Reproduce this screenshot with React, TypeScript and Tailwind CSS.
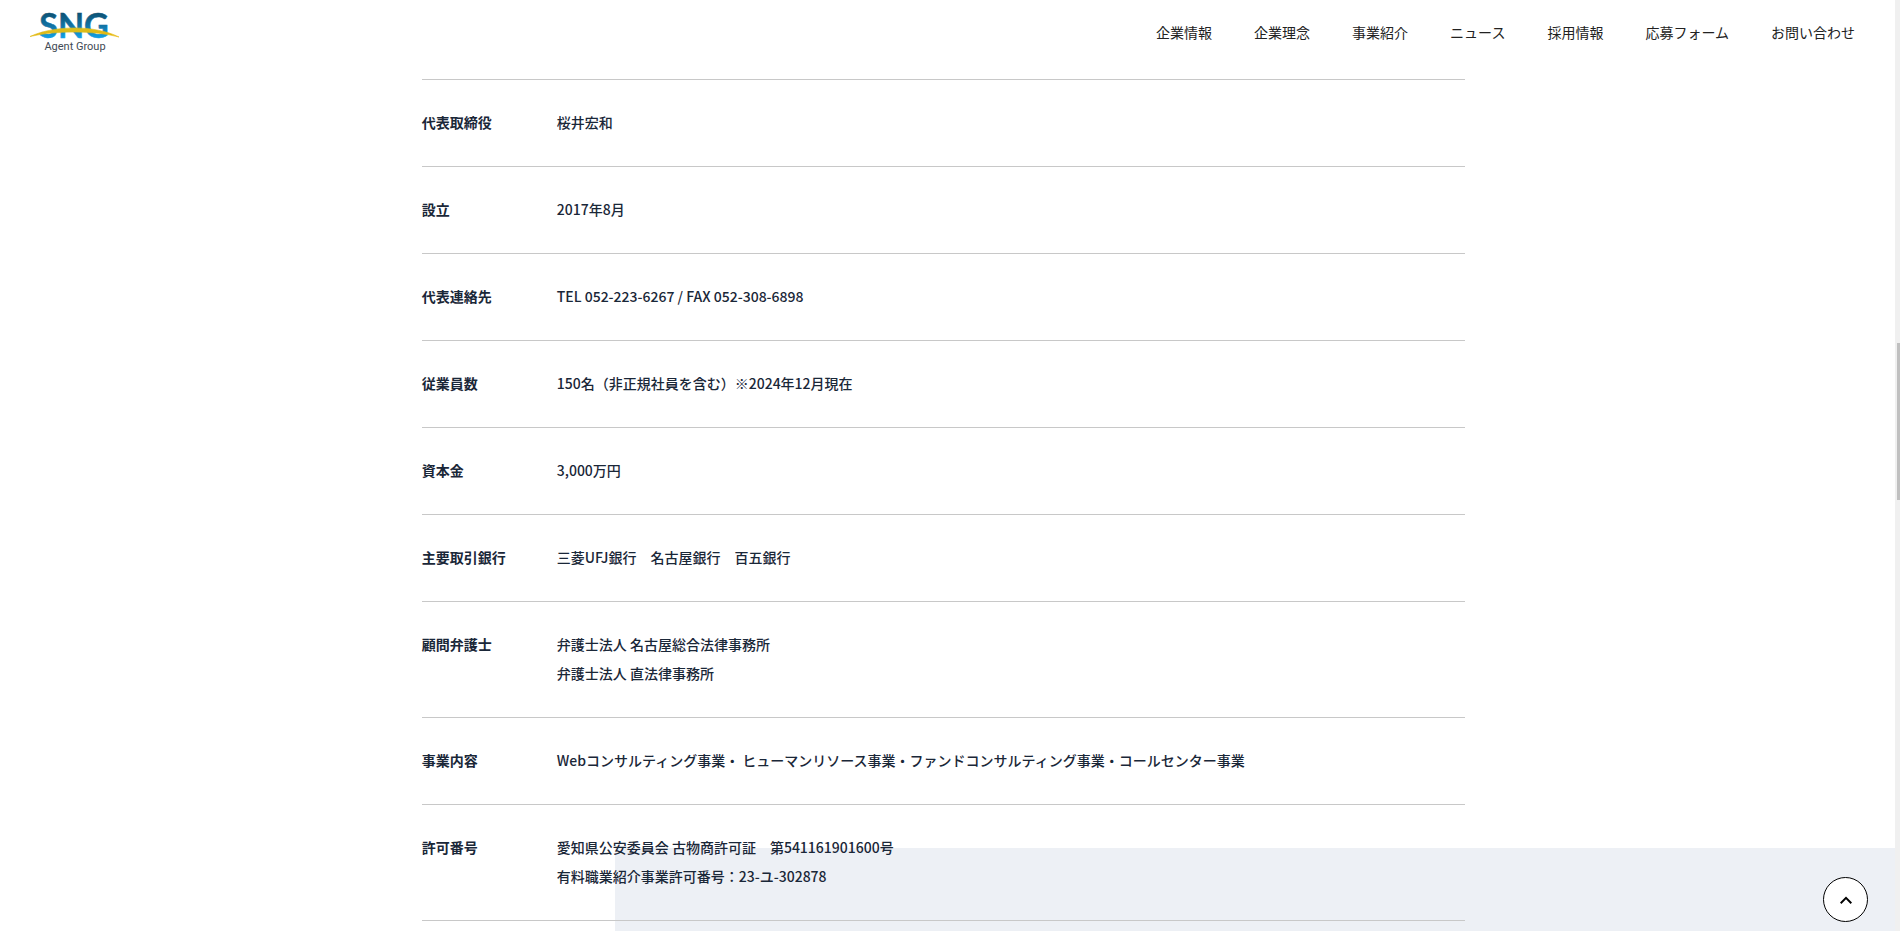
import React from "react";

const navItems = [
  "企業情報",
  "企業理念",
  "事業紹介",
  "ニュース",
  "採用情報",
  "応募フォーム",
  "お問い合わせ",
];

const companyInfo = [
  { label: "代表取締役", lines: ["桜井宏和"] },
  { label: "設立", lines: ["2017年8月"] },
  { label: "代表連絡先", lines: ["TEL 052-223-6267 / FAX 052-308-6898"] },
  { label: "従業員数", lines: ["150名（非正規社員を含む）※2024年12月現在"] },
  { label: "資本金", lines: ["3,000万円"] },
  { label: "主要取引銀行", lines: ["三菱UFJ銀行　名古屋銀行　百五銀行"] },
  { label: "顧問弁護士", lines: ["弁護士法人 名古屋総合法律事務所", "弁護士法人 直法律事務所"] },
  {
    label: "事業内容",
    lines: ["Webコンサルティング事業・ ヒューマンリソース事業・ファンドコンサルティング事業・コールセンター事業"],
  },
  {
    label: "許可番号",
    lines: ["愛知県公安委員会 古物商許可証　第541161901600号", "有料職業紹介事業許可番号：23-ユ-302878"],
  },
];

const Logo = () => (
  <svg className="w-[90px] h-16" viewBox="0 0 90 64" role="img" aria-label="SNG Agent Group">
    <defs>
      <linearGradient id="sng" gradientUnits="userSpaceOnUse" x1="0" y1="12" x2="0" y2="39">
        <stop offset="0" stopColor="#0c4f70" />
        <stop offset="0.5" stopColor="#1272a3" />
        <stop offset="1" stopColor="#12a5ec" />
      </linearGradient>
      <linearGradient id="swoosh" x1="0" y1="0" x2="1" y2="0">
        <stop offset="0" stopColor="#e3b912" />
        <stop offset="0.5" stopColor="#d9bd1c" />
        <stop offset="1" stopColor="#e8b80c" />
      </linearGradient>
    </defs>
    <text
      x="44"
      y="38"
      textAnchor="middle"
      fontSize="34"
      fontWeight="700"
      fill="url(#sng)"
      stroke="url(#sng)"
      strokeWidth="0.500"
      className="font-['Lato',sans-serif]"
    >
      SNG
    </text>
    <path
      d="M0 36.500C25 25 65 25 89 37C65 30.500 25 30.500 0 36.500Z"
      fill="url(#swoosh)"
      stroke="url(#swoosh)"
      strokeWidth="0.600"
    />
    <text
      x="45"
      y="50"
      textAnchor="middle"
      fontSize="11"
      fill="#3f4a55"
      className="font-['Roboto',sans-serif]"
    >
      Agent Group
    </text>
  </svg>
);

export default function CompanyPage() {
  return (
    <div className="flex h-screen overflow-hidden bg-white font-['Noto_Sans_CJK_JP',sans-serif] text-[14px]">
      <div className="relative flex-1 min-w-0">
        {/* Background panel */}
        <div className="absolute bottom-0 right-0 h-[83px] w-[67.55%] bg-[#edf0f5]"></div>

        <header className="relative flex h-16 items-center justify-between pl-[30px] pr-10">
          <a href="#">
            <Logo />
          </a>
          <nav>
            <ul className="flex gap-[42px] text-[#222]">
              {navItems.map((item) => (
                <li key={item}>
                  <a href="#" className="hover:opacity-70 transition-opacity">{item}</a>
                </li>
              ))}
            </ul>
          </nav>
        </header>

        {/* Company table */}
        <main className="relative pt-[15px] pr-2">
          <table className="mx-auto w-[55.3%] border-t border-[#c8c8c8] text-left font-medium leading-[29px] text-[#1a2738]">
            <tbody>
              {companyInfo.map((row) => (
                <tr key={row.label} className="border-b border-[#c8c8c8] align-top">
                  <th scope="row" className="w-[135px] pt-7 pb-[29px] font-bold">{row.label}</th>
                  <td className="pt-7 pb-[29px]">
                    {row.lines.map((line) => (
                      <p key={line}>{line}</p>
                    ))}
                  </td>
                </tr>
              ))}
            </tbody>
          </table>
        </main>

        <button
          type="button"
          aria-label="ページの先頭へ"
          className="absolute bottom-[9px] right-[27px] flex h-[45px] w-[45px] items-center justify-center rounded-full border border-black bg-white"
        >
          <svg className="w-3 h-2" viewBox="0 0 12 8" fill="none" stroke="#000" strokeWidth="2">
            <path d="M0.700 7.200L6 1.900L11.300 7.200" />
          </svg>
        </button>
      </div>

      {/* Scroll track */}
      <div className="w-[5px] bg-[#f0f0f0] pt-[343px] pl-0.5">
        <div className="h-[157px] bg-[#c0c0c0]"></div>
      </div>
    </div>
  );
}
